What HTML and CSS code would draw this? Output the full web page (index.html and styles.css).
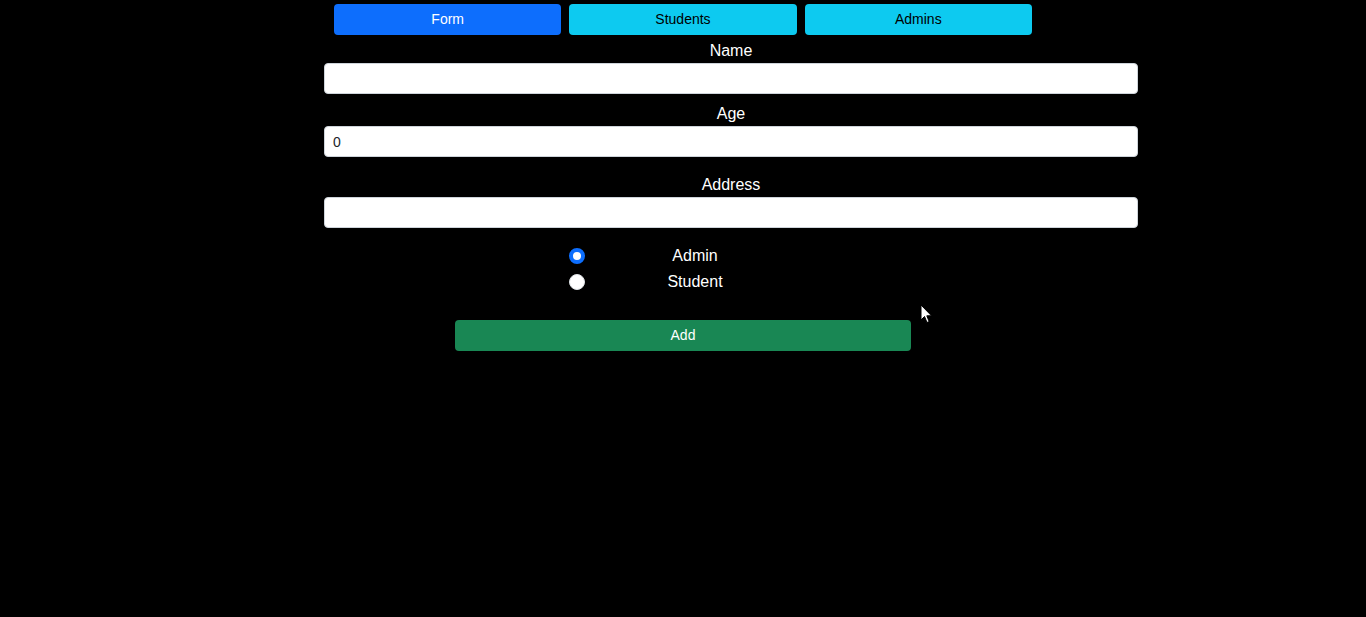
FILE: index.html
```html
<!DOCTYPE html>
<html>
<head>
<meta charset="utf-8">
<link rel="stylesheet" href="styles.css">
</head>
<body>
<nav class="tabs">
  <button class="tab tab-primary">Form</button>
  <button class="tab tab-info">Students</button>
  <button class="tab tab-info">Admins</button>
</nav>
<form class="form">
  <div class="field field-first">
    <label class="label">Name</label>
    <input class="input" type="text" value="">
  </div>
  <div class="field">
    <label class="label">Age</label>
    <input class="input" type="text" value="0">
  </div>
  <div class="field field-wide">
    <label class="label">Address</label>
    <input class="input" type="text" value="">
  </div>
  <div class="radios">
    <div class="radio-row"><span class="radio radio-on"></span><span class="radio-label">Admin</span></div>
    <div class="radio-row"><span class="radio"></span><span class="radio-label">Student</span></div>
  </div>
</form>
<div class="actions">
  <button class="add">Add</button>
</div>
<svg class="cursor" width="13" height="20" viewBox="0 0 13 20"><path d="M1 1 L1 16 L4.5 12.5 L7 18.5 L9.2 17.6 L6.8 11.8 L11.5 11.8 Z" fill="#fff" stroke="#000" stroke-width="1"/></svg>
</body>
</html>
```
FILE: styles.css
```css
* { box-sizing: border-box; }
html, body { background: #000; }
body {
  margin: 0;
  font-family: "Liberation Sans", Arial, sans-serif;
  color: #fff;
  position: relative;
  min-height: 617px;
}
.tabs {
  display: flex;
  gap: 8px;
  width: 698px;
  margin: 0 auto;
  padding-top: 4px;
}
.tab {
  flex: 1;
  height: 31px;
  border: none;
  border-radius: 4px;
  font-family: "Liberation Sans", Arial, sans-serif;
  font-size: 14px;
  padding: 0 0 2px;
}
.tab-primary { background: #0d6efd; color: #fff; }
.tab-info { background: #0dcaf0; color: #000; }
.form {
  width: 814px;
  margin-left: 324px;
}
.field { display: flex; flex-direction: column; margin-top: 9px; }
.field-first { margin-top: 5px; }
.field-wide { margin-top: 17px; }
.label {
  text-align: center;
  font-size: 16px;
  line-height: 20px;
  height: 21px;
  padding-top: 1px;
  margin-bottom: 2px;
}
.input {
  height: 31px;
  width: 100%;
  border: 1px solid #ced4da;
  border-radius: 4px;
  background: #fff;
  font-family: "Liberation Sans", Arial, sans-serif;
  font-size: 14px;
  color: #212529;
  padding: 0 8px;
}
.radios {
  margin-top: 15px;
  margin-left: 245px;
}
.radio-row {
  display: flex;
  align-items: center;
  height: 26px;
}
.radio {
  width: 16px;
  height: 16px;
  border-radius: 50%;
  background: #fff;
  border: 1px solid #dee2e6;
  flex: none;
}
.radio-on {
  background: #fff;
  border: 4px solid #0d6efd;
}
.radio-label {
  width: 220px;
  text-align: center;
  font-size: 16px;
}
.actions {
  display: flex;
  justify-content: center;
  margin-top: 25px;
}
.add {
  width: 456px;
  height: 31px;
  background: #198754;
  color: #fff;
  border: none;
  border-radius: 4px;
  font-family: "Liberation Sans", Arial, sans-serif;
  font-size: 14px;
  padding: 0 0 2px;
}
.cursor {
  position: absolute;
  left: 920px;
  top: 304px;
}
```
